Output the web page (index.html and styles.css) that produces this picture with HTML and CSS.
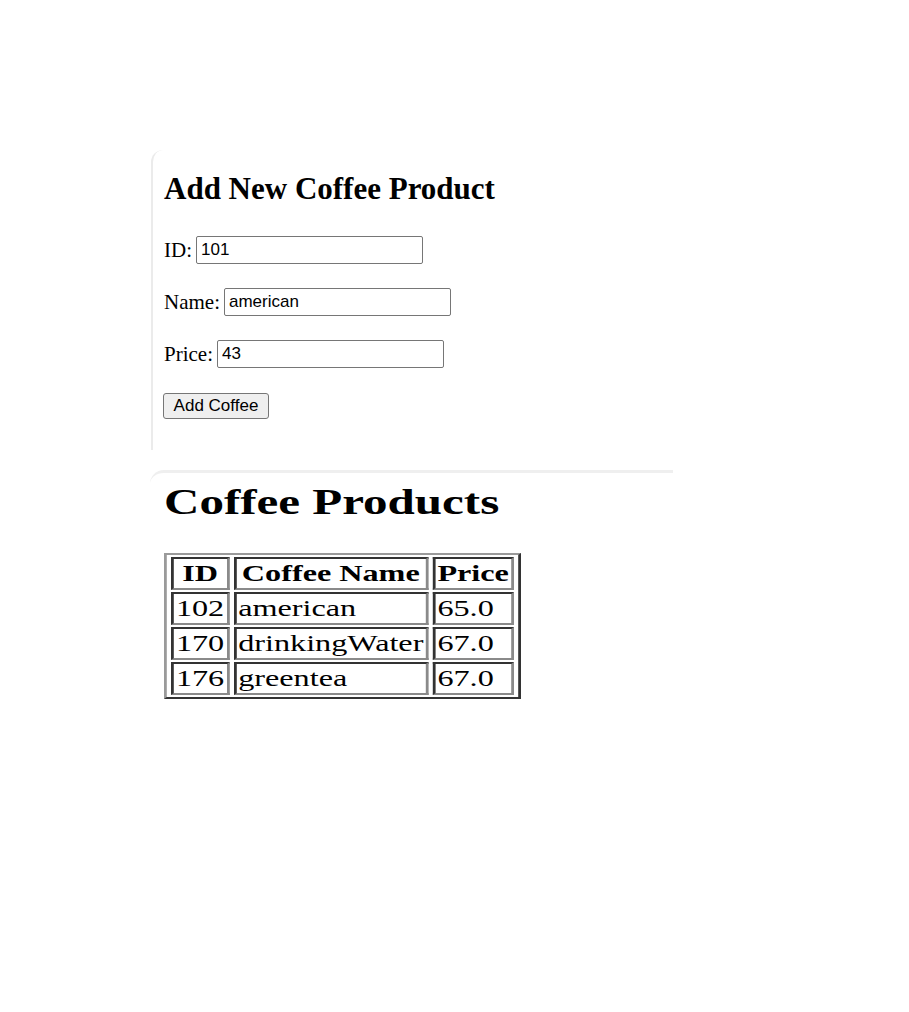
FILE: index.html
```html
<!DOCTYPE html>
<html>
<head>
<meta charset="utf-8">
<title>Coffee Products</title>
<link rel="stylesheet" href="styles.css">
</head>
<body>
<div class="page">
  <section class="form-panel">
    <h2 class="form-title">Add New Coffee Product</h2>
    <form class="coffee-form">
      <div class="field"><label class="field-label">ID:</label><input class="field-input" type="text" value="101"></div>
      <div class="field"><label class="field-label">Name:</label><input class="field-input" type="text" value="american"></div>
      <div class="field"><label class="field-label">Price:</label><input class="field-input" type="text" value="43"></div>
      <div class="field"><button class="add-btn" type="button">Add Coffee</button></div>
    </form>
  </section>
  <section class="list-panel">
    <div class="stretch">
      <h1 class="list-title">Coffee Products</h1>
      <table class="products">
        <tr><th>ID</th><th>Coffee Name</th><th>Price</th></tr>
        <tr><td>102</td><td>american</td><td>65.0</td></tr>
        <tr><td>170</td><td>drinkingWater</td><td>67.0</td></tr>
        <tr><td>176</td><td>greentea</td><td>67.0</td></tr>
      </table>
    </div>
  </section>
</div>
</body>
</html>
```
FILE: styles.css
```css
html, body {
  margin: 0;
  padding: 0;
  background: #ffffff;
}
.page {
  padding: 150px 0 0 151px;
  font-family: "Liberation Serif", "Times New Roman", serif;
  color: #000;
}
.form-panel {
  box-sizing: border-box;
  height: 300px;
  border-left: 2px solid #ebebeb;
  border-top-left-radius: 12px;
  padding: 21px 0 0 11px;
}
.form-title {
  margin: 0;
  font-size: 31px;
  line-height: 36px;
  font-weight: bold;
}
.coffee-form {
  margin-top: 29px;
  display: flex;
  flex-direction: column;
  gap: 24px;
}
.field {
  display: flex;
  align-items: center;
  gap: 4px;
  height: 28px;
}
.field-label {
  font-size: 21px;
}
.field-input {
  box-sizing: border-box;
  width: 227px;
  height: 28px;
  border: 1px solid #767676;
  border-radius: 2px;
  padding: 1px 4px;
  font-family: "Liberation Sans", Arial, sans-serif;
  font-size: 17px;
  color: #000;
}
.add-btn {
  box-sizing: border-box;
  width: 106px;
  height: 26px;
  margin-left: -1px;
  border: 1px solid #767676;
  border-radius: 3px;
  background: #efefef;
  font-family: "Liberation Sans", Arial, sans-serif;
  font-size: 17px;
  color: #000;
  padding: 0;
}
.list-panel {
  box-sizing: border-box;
  width: 523px;
  margin: 20px 0 0 -1px;
  border-top: 3px solid #efefef;
  border-top-left-radius: 14px;
  padding: 10px 0 0 14px;
}
.stretch {
  transform: scaleX(1.40);
  transform-origin: left top;
}
.list-title {
  margin: 0;
  font-size: 35px;
  line-height: 40px;
  font-weight: bold;
}
.products {
  margin-top: 30px;
  border-collapse: separate;
  border-spacing: 3px 2px;
  border-style: solid;
  border-width: 2px;
  border-color: #9a9a9a #333 #333 #9a9a9a;
  font-size: 23px;
}
.products th,
.products td {
  padding: 1px 1.5px;
  line-height: 27px;
  border-style: solid;
  border-width: 2px;
  border-color: #333 #8a8a8a #8a8a8a #333;
}
.products th {
  font-weight: bold;
  text-align: center;
}
.products td {
  text-align: left;
}
```
